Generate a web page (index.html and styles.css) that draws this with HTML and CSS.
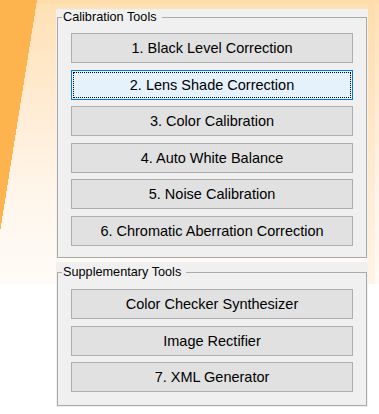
FILE: index.html
```html
<!DOCTYPE html>
<html>

<head>
    <meta charset="utf-8">
    <title>Calibration Tools</title>
    <link rel="stylesheet" href="styles.css">
</head>

<body>
    <div class="window">
        <div class="group">
            <fieldset class="group-box">
                <legend class="group-title">Calibration Tools</legend>
                <div class="button-list">
                    <button class="tool-button">1. Black Level Correction</button>
                    <button class="tool-button focused">2. Lens Shade Correction</button>
                    <button class="tool-button">3. Color Calibration</button>
                    <button class="tool-button">4. Auto White Balance</button>
                    <button class="tool-button">5. Noise Calibration</button>
                    <button class="tool-button">6. Chromatic Aberration Correction</button>
                </div>
            </fieldset>
        </div>

        <div class="group supplementary">
            <fieldset class="group-box">
                <legend class="group-title">Supplementary Tools</legend>
                <div class="button-list">
                    <button class="tool-button">Color Checker Synthesizer</button>
                    <button class="tool-button">Image Rectifier</button>
                    <button class="tool-button">7. XML Generator</button>
                </div>
            </fieldset>
        </div>
    </div>
</body>

</html>
```

FILE: styles.css
```css
html {
    height: 100%;
}

body {
    margin: 0;
    min-height: 100%;
    font-family: 'Liberation Sans', Arial, sans-serif;
    color: #000;
    background-color: #fff;
    background-image:
        linear-gradient(to bottom right, #fdb44f 50%, transparent 50%),
        linear-gradient(#ffdcac, #fff4e6),
        linear-gradient(#ffdcac, #ffdcac),
        linear-gradient(to bottom, #ffe0b4 0, #ffecd5 110px, #fff7ee 210px, #fffbf6 284px);
    background-size: 37px 232px, 7px 284px, 100% 4px, 100% 284px;
    background-position: 0 0, 368px 0, 0 0, 0 0;
    background-repeat: no-repeat;
}

.window {
    width: 312px;
    padding: 9px 11px 0 56px;
}

.group {
    background: #f0f0f0;
    padding: 1px 1px 0 1px;
}

.group.supplementary {
    margin-top: 4px;
    padding-top: 3px;
    padding-bottom: 1px;
}

.group-box {
    margin: 0;
    padding: 0;
    min-width: 0;
    border: 1px solid #aaaaaa;
}

.group-title {
    margin-left: 4px;
    padding: 0 5px 0 1px;
    font-size: 12.7px;
    line-height: 15px;
}

.button-list {
    display: flex;
    flex-direction: column;
    gap: 6.6px;
    padding: 8px 13px 11px 13px;
}

.supplementary .button-list {
    padding-top: 9px;
    padding-bottom: 13px;
}

.tool-button {
    display: block;
    width: 100%;
    height: 30px;
    box-sizing: border-box;
    margin: 0;
    padding: 0;
    background: #e1e1e1;
    border: 1px solid #adadad;
    border-radius: 0;
    font-family: 'Liberation Sans', Arial, sans-serif;
    font-size: 14.5px;
    color: #000;
    text-align: center;
}

.tool-button.focused {
    background: #e5f1fb;
    border-color: #0078d7;
    outline: 1px dotted #000;
    outline-offset: -3px;
}
```
